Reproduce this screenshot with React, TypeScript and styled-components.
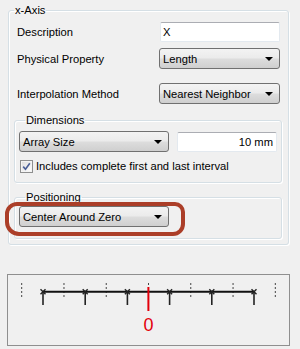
import React from "react";
import styled, { createGlobalStyle } from "styled-components";

const GlobalStyle = createGlobalStyle`
  html, body {
    margin: 0;
    padding: 0;
    background: #f0f0f0;
  }
  body {
    font-family: "Liberation Sans", Arial, sans-serif;
    font-size: 11.2px;
    color: #000;
  }
`;

const Page = styled.div`
  width: 300px;
  height: 349px;
  padding-top: 3px;
  box-sizing: border-box;
  overflow: hidden;
  background: #f0f0f0;
`;

const Group = styled.fieldset<{ $margin: string; $pad: string }>`
  margin: ${(p) => p.$margin};
  padding: ${(p) => p.$pad};
  min-width: 0;
  border: 1px solid #d5dfe5;
  border-radius: 3px;
  box-shadow: inset 1px 1px 0 #fff, 1px 1px 0 #fff;
`;

const Legend = styled.legend<{ $offset: number }>`
  margin-left: ${(p) => p.$offset}px;
  padding: 0 1px;
  line-height: 14px;
  font-size: 11.2px;
`;

const FormRow = styled.div<{ $mt: number }>`
  display: grid;
  grid-template-columns: 142px 121px;
  align-items: center;
  padding: 0 8px;
  margin-top: ${(p) => p.$mt}px;
`;

const Label = styled.span`
  line-height: 14px;
  white-space: nowrap;
`;

const TextBox = styled.div<{ $width: number; $align?: string }>`
  box-sizing: border-box;
  width: ${(p) => p.$width}px;
  height: 20px;
  margin-left: 1px;
  padding: 0 3px 0 2px;
  display: flex;
  align-items: center;
  justify-content: ${(p) => (p.$align === "right" ? "flex-end" : "flex-start")};
  background: #fff;
  border: 1px solid #e3e9ef;
  border-top-color: #abadb3;
  border-radius: 2px;
  white-space: nowrap;
`;

const Combo = styled.div<{ $width: number }>`
  box-sizing: border-box;
  width: ${(p) => p.$width}px;
  height: 21px;
  padding: 0 6px 0 3px;
  display: flex;
  align-items: center;
  justify-content: space-between;
  border: 1px solid #707070;
  border-radius: 3px;
  background: linear-gradient(#f3f3f3 0%, #ebebeb 48%, #dddddd 52%, #cfcfcf 100%);
  white-space: nowrap;
`;

const Arrow = styled.span`
  width: 0;
  height: 0;
  border-left: 4px solid transparent;
  border-right: 4px solid transparent;
  border-top: 4px solid #000;
  margin-top: 1px;
`;

const InlineRow = styled.div<{ $mt?: number }>`
  display: flex;
  align-items: center;
  gap: 7px;
  margin-top: ${(p) => p.$mt ?? 0}px;
`;

const CheckRow = styled.label`
  display: flex;
  align-items: center;
  gap: 3px;
  margin: 8px 0 0 1px;
  line-height: 13px;
  white-space: nowrap;
`;

const CheckBox = styled.span`
  box-sizing: border-box;
  width: 13px;
  height: 13px;
  display: flex;
  align-items: center;
  justify-content: center;
  border: 1px solid #8e8f8f;
  background: linear-gradient(135deg, #dcdcdc, #ffffff);
  box-shadow: inset 0 0 0 1px #f4f4f4;
`;

const HighlightWrap = styled.div`
  position: relative;
  width: 150px;
`;

const Highlight = styled.div`
  position: absolute;
  left: -14px;
  top: -4px;
  width: 180px;
  height: 34px;
  box-sizing: border-box;
  border: 4px solid #ab3e28;
  border-radius: 12px 10px 12px 14px;
  pointer-events: none;
`;

const Preview = styled.div`
  box-sizing: border-box;
  height: 72px;
  margin: 29px 10px 0 7px;
  border: 1px solid #8f8f8f;
  background: #f0f0f0;
`;

const ticks = [0, 1, 2, 3, 4, 5].map((i) => 35 + i * 42.2);
const grid = [0, 1, 2, 3, 4, 5, 6].map((j) => 13.7 + j * 42.27);

function AxisPreview() {
  return (
    <svg width="281" height="70" viewBox="0 0 281 70">
      {grid.map((x, i) => (
        <line key={i} x1={x} y1={8} x2={x} y2={24} stroke="#444" strokeWidth="1" strokeDasharray="2 2" />
      ))}
      <line x1={35} y1={16.7} x2={246} y2={16.7} stroke="#111" strokeWidth="2" />
      {ticks.map((x, i) => (
        <g key={i} stroke="#222">
          <line x1={x} y1={17} x2={x} y2={30} strokeWidth="1.6" />
          <line x1={x - 2.5} y1={14.2} x2={x + 2.5} y2={19.2} strokeWidth="1.4" />
          <line x1={x - 2.5} y1={19.2} x2={x + 2.5} y2={14.2} strokeWidth="1.4" />
        </g>
      ))}
      <line x1={140.4} y1={12} x2={140.4} y2={36} stroke="#e3000b" strokeWidth="2" />
      <text
        x={140.6}
        y={56}
        textAnchor="middle"
        fill="#e3000b"
        fontSize="18"
        fontFamily="'Liberation Sans', Arial, sans-serif"
      >
        0
      </text>
    </svg>
  );
}

export default function App() {
  return (
    <Page>
      <GlobalStyle />
      <Group $margin="0 11px 0 8px" $pad="0 0 5px 0">
        <Legend $offset={5}>x-Axis</Legend>
        <FormRow $mt={5}>
          <Label>Description</Label>
          <TextBox $width={120}>X</TextBox>
        </FormRow>
        <FormRow $mt={6}>
          <Label>Physical Property</Label>
          <Combo $width={121}>
            Length
            <Arrow />
          </Combo>
        </FormRow>
        <FormRow $mt={14}>
          <Label>Interpolation Method</Label>
          <Combo $width={121}>
            Nearest Neighbor
            <Arrow />
          </Combo>
        </FormRow>

        <Group $margin="9px 6px 0 5px" $pad="4px 4px 9px 4px">
          <Legend $offset={6}>Dimensions</Legend>
          <InlineRow>
            <Combo $width={150}>
              Array Size
              <Arrow />
            </Combo>
            <TextBox $width={100} $align="right">
              10 mm
            </TextBox>
          </InlineRow>
          <CheckRow>
            <CheckBox>
              <svg width="9" height="9" viewBox="0 0 9 9">
                <path d="M1.2 4.6 L3.5 7.2 L7.8 1.3" fill="none" stroke="#4a5f97" strokeWidth="1.6" />
              </svg>
            </CheckBox>
            Includes complete first and last interval
          </CheckRow>
        </Group>

        <Group $margin="7px 6px 0 5px" $pad="2px 4px 11px 4px">
          <Legend $offset={6}>Positioning</Legend>
          <HighlightWrap>
            <Combo $width={150}>
              Center Around Zero
              <Arrow />
            </Combo>
            <Highlight />
          </HighlightWrap>
        </Group>
      </Group>

      <Preview>
        <AxisPreview />
      </Preview>
    </Page>
  );
}
